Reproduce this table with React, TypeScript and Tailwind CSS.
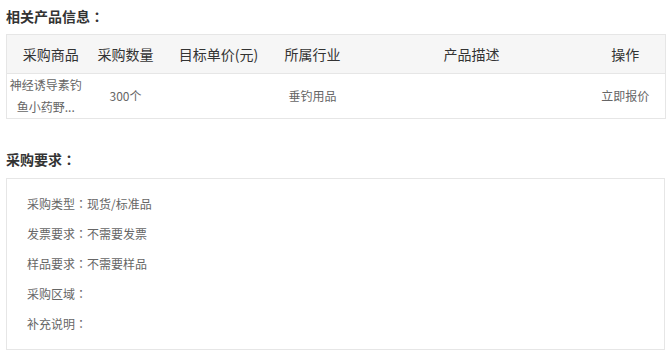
const font = { fontFamily: '"Microsoft YaHei", "Noto Sans CJK SC", "Noto Sans", sans-serif' }

const Colon = () => <span style={{ fontFamily: '"Noto Sans CJK TC", sans-serif' }}>：</span>

const columns = [
  { title: '采购商品', width: 'w-[88px]' },
  { title: '采购数量', width: 'w-[62px]' },
  { title: '目标单价(元)', width: 'w-[124px]' },
  { title: '所属行业', width: 'w-[64px]' },
  { title: '产品描述', width: 'w-[254px]' },
  { title: '操作', width: 'w-[67px] pr-[13px]' },
]

const requirements = [
  { label: '采购类型', value: '现货/标准品' },
  { label: '发票要求', value: '不需要发票' },
  { label: '样品要求', value: '不需要样品' },
  { label: '采购区域', value: '' },
  { label: '补充说明', value: '' },
]

export default function App() {
  return (
    <div className="w-[672px] h-[360px] bg-white px-[6px] pt-[6px] text-[#333]" style={font}>
      {/* 产品信息 */}
      <h3 className="text-[14px] leading-[20px] font-bold">相关产品信息<Colon /></h3>
      <table className="mt-[8px] w-[659px] table-fixed border-collapse border border-[#e6e6e6]">
        <thead>
          <tr className="h-[39px] bg-[#f6f6f6] border-b border-[#e6e6e6]">
            {columns.map(c => (
              <th key={c.title} className={`${c.width} text-[14px] font-normal text-[#333] text-center p-0`}>
                {c.title}
              </th>
            ))}
          </tr>
        </thead>
        <tbody>
          <tr className="h-[45px] text-[12px] text-[#666]">
            <td className="pl-0 pr-[10px] text-center leading-[22px]">神经诱导素钓鱼小药野...</td>
            <td className="text-center">300个</td>
            <td className="text-center"></td>
            <td className="text-center">垂钓用品</td>
            <td className="text-center"></td>
            <td className="text-center pr-[13px]">立即报价</td>
          </tr>
        </tbody>
      </table>

      {/* 采购要求 */}
      <h3 className="mt-[30px] text-[14px] leading-[20px] font-bold">采购要求<Colon /></h3>
      <div className="mt-[9px] w-[659px] border border-[#e6e6e6] pl-[20px] py-[10px]">
        {requirements.map(r => (
          <div key={r.label} className="text-[12px] leading-[30px] text-[#666]">
            {r.label}<Colon />{r.value}
          </div>
        ))}
      </div>
    </div>
  )
}
